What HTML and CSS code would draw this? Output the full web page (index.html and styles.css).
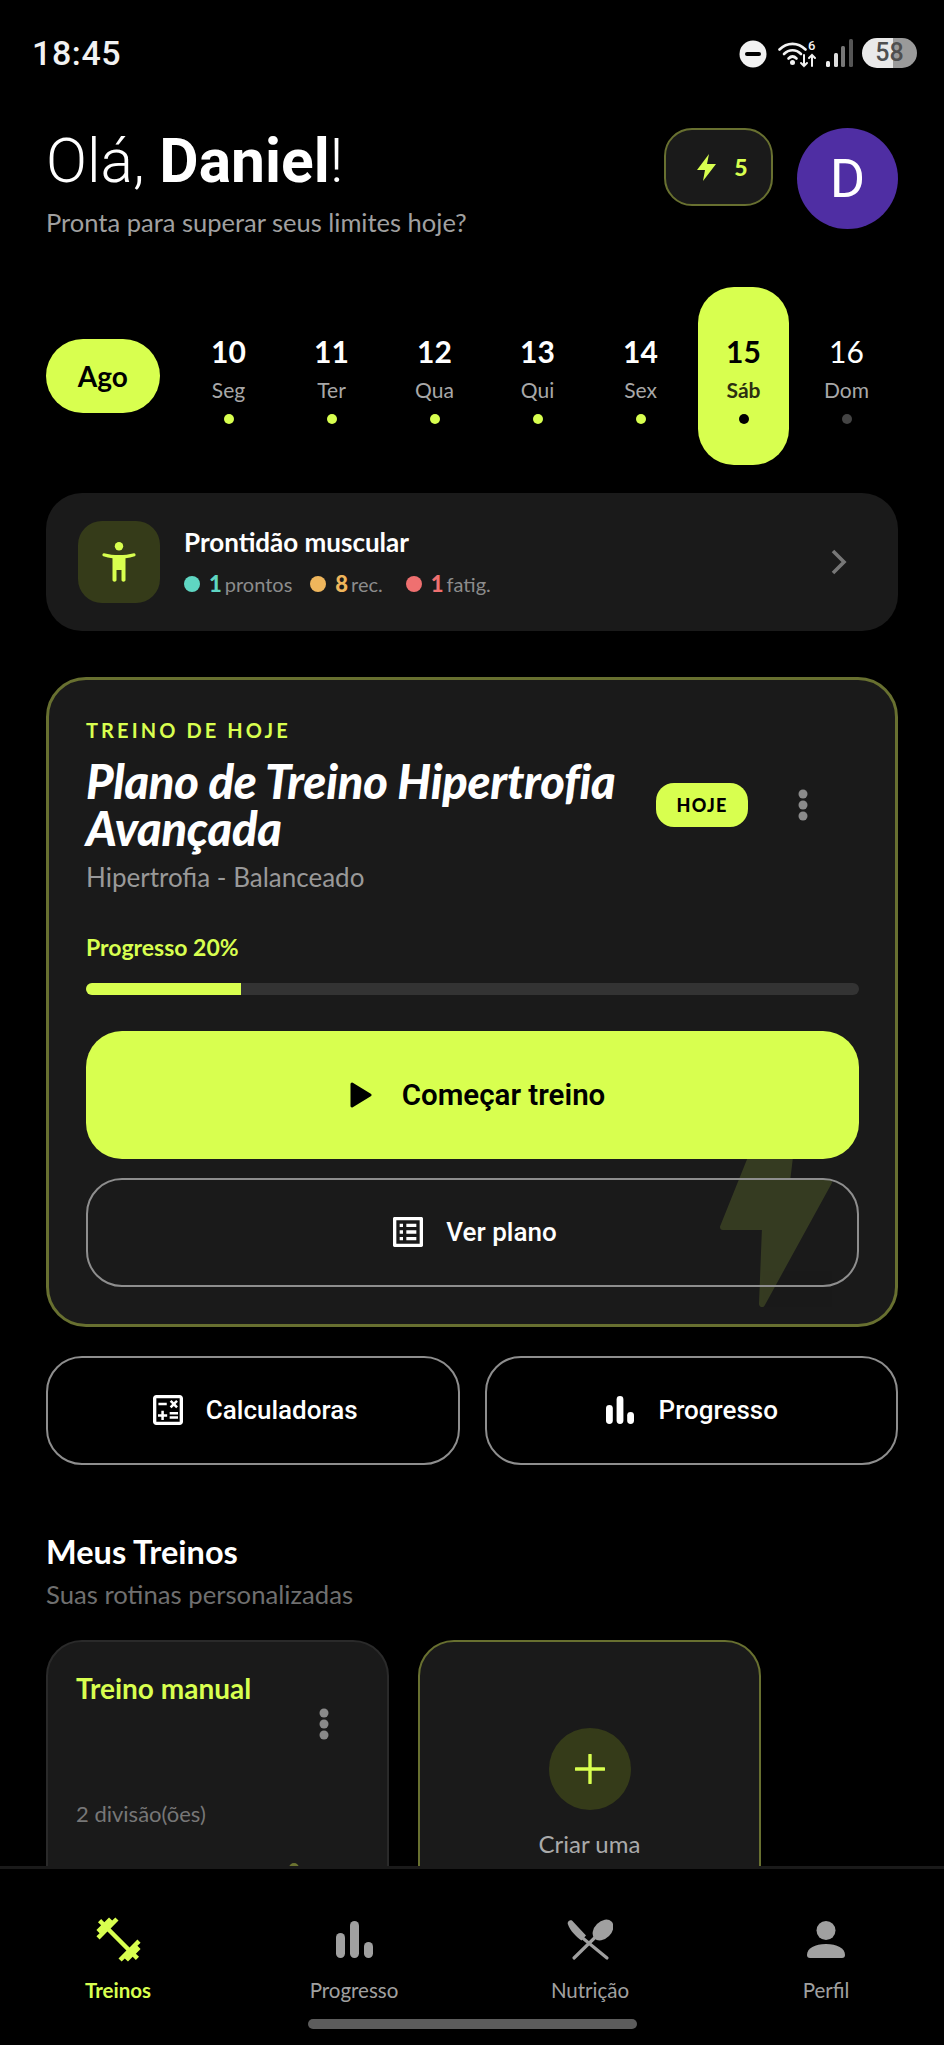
FILE: index.html
```html
<!DOCTYPE html>
<html lang="pt-BR">
<head>
<meta charset="utf-8">
<title>Treinos</title>
<link rel="stylesheet" href="styles.css">
</head>
<body>
<div class="app">
  <div class="status">
    <span class="time">18:45</span>
    <div class="status-icons">
      <svg class="si-dnd" width="28" height="28" viewBox="0 0 28 28"><circle cx="14" cy="14" r="13.500" fill="#f2f2f2"/><rect x="6" y="12" width="16" height="4" rx="2" fill="#000"/></svg>
      <svg class="si-wifi" width="40" height="34" viewBox="0 -4 40 34"><g fill="none" stroke="#f2f2f2" stroke-width="2.6" stroke-linecap="round"><path d="M1.500 9.500C9 2 20 2 27.500 9.500"/><path d="M6 14C11 9 18 9 23 14"/><path d="M10.500 18.500C13 16 16 16 18.500 18.500"/><path d="M26 15v11m-3-3l3 3 3-3" stroke-width="2"/><path d="M34 26V15m-3 3l3-3 3 3" stroke-width="2"/></g><circle cx="14.500" cy="22.500" r="2.500" fill="#f2f2f2"/><text class="si-six" x="30" y="10">6</text></svg>
      <svg class="si-signal" width="27" height="28" viewBox="0 0 27 28"><rect x="0" y="22" width="4" height="6" rx="1.500" fill="#eee"/><rect x="8" y="14" width="4" height="14" rx="1.500" fill="#ddd"/><rect x="15" y="7" width="4" height="21" rx="1.500" fill="#777"/><rect x="23" y="0" width="4" height="28" rx="1.500" fill="#555"/></svg>
      <span class="battery">58</span>
    </div>
  </div>

  <main class="main">
    <header class="greet">
      <div class="greet-text">
        <h1 class="hello">Olá, <b>Daniel</b>!</h1>
        <p class="hello-sub">Pronta para superar seus limites hoje?</p>
      </div>
      <div class="streak">
        <svg width="19" height="27" viewBox="0 0 19 27"><path d="M12 0L0 16h8L6 27 19 10h-9z" fill="#d8ff4f"/></svg>
        <span class="streak-num">5</span>
      </div>
      <div class="avatar">D</div>
    </header>

    <section class="strip">
      <div class="month">Ago</div>
      <div class="days">
        <div class="day"><span class="day-n">10</span><span class="day-l">Seg</span><i class="day-dot"></i></div>
        <div class="day"><span class="day-n">11</span><span class="day-l">Ter</span><i class="day-dot"></i></div>
        <div class="day"><span class="day-n">12</span><span class="day-l">Qua</span><i class="day-dot"></i></div>
        <div class="day"><span class="day-n">13</span><span class="day-l">Qui</span><i class="day-dot"></i></div>
        <div class="day"><span class="day-n">14</span><span class="day-l">Sex</span><i class="day-dot"></i></div>
        <div class="day day-active"><span class="day-n">15</span><span class="day-l">Sáb</span><i class="day-dot"></i></div>
        <div class="day day-off"><span class="day-n">16</span><span class="day-l">Dom</span><i class="day-dot"></i></div>
      </div>
    </section>

    <section class="ready">
      <div class="ready-icon">
        <svg width="34" height="40" viewBox="0 0 34 40" fill="#d8ff4f"><circle cx="17" cy="4.200" r="4.200"/><path d="M2 11.200c5 1.200 10 1.900 15 1.900s10-.7 15-1.900c1.500-.3 2.300 2.500.7 3-3 1-6 1.600-9.200 2V38c0 2.300-4 2.300-4 0V28h-5v10c0 2.300-4 2.300-4 0V16.200c-3.200-.4-6.200-1-9.200-2-1.600-.5-.8-3.300.7-3z"/><path d="M16.200 28h1.600v10h-1.600z" fill="#353b19"/></svg>
      </div>
      <div class="ready-body">
        <div class="ready-title">Prontidão muscular</div>
        <div class="ready-stats">
          <i class="sdot sdot-teal"></i><b class="n-teal">1</b><span class="stat-l">prontos</span>
          <i class="sdot sdot-orange"></i><b class="n-orange">8</b><span class="stat-l">rec.</span>
          <i class="sdot sdot-red"></i><b class="n-red">1</b><span class="stat-l">fatig.</span>
        </div>
      </div>
      <svg class="chev" width="18" height="26" viewBox="0 0 18 26"><path d="M3 2l11 11L3 24" fill="none" stroke="#777" stroke-width="3.600"/></svg>
    </section>

    <section class="today">
      <svg class="bolt" width="113" height="158" viewBox="0 0 113 158"><path d="M38 -10H72L67 32H109L42 154L45 77H3z" fill="#d8ff4f" stroke="#d8ff4f" stroke-width="6" stroke-linejoin="round"/></svg>
      <div class="today-label">TREINO DE HOJE</div>
      <div class="today-head">
        <h2 class="today-title">Plano de Treino Hipertrofia Avançada</h2>
        <span class="pill">HOJE</span>
        <svg class="kebab" width="10" height="32" viewBox="0 0 10 32"><circle cx="5" cy="5" r="4.500"/><circle cx="5" cy="16" r="4.500"/><circle cx="5" cy="27" r="4.500"/></svg>
      </div>
      <p class="today-sub">Hipertrofia - Balanceado</p>
      <div class="prog-label">Progresso 20%</div>
      <div class="prog-track"><div class="prog-fill" style="width:20%"></div></div>
      <button class="btn-primary">
        <svg width="22" height="26" viewBox="0 0 22 26"><path d="M2 2l18 11L2 24z" fill="#000" stroke="#000" stroke-width="3" stroke-linejoin="round"/></svg>
        Começar treino
      </button>
      <button class="btn-outline">
        <svg width="40" height="40" viewBox="0 0 24 24" fill="#fff"><path d="M19 5v14H5V5h14m1.100-2H3.900c-.5 0-.9.4-.9.9v16.200c0 .4.400.9.900.9h16.200c.400 0 .9-.5.9-.9V3.900c0-.5-.5-.9-.9-.9zM11 7h6v2h-6V7zm0 4h6v2h-6v-2zm0 4h6v2h-6v-2zM7 7h2v2H7V7zm0 4h2v2H7v-2zm0 4h2v2H7v-2z"/></svg>
        Ver plano
      </button>
    </section>

    <section class="quick">
      <button class="btn-outline">
        <svg width="40" height="40" viewBox="0 0 24 24" fill="#fff"><path d="M19 3H5c-1.100 0-2 .9-2 2v14c0 1.100.9 2 2 2h14c1.100 0 2-.9 2-2V5c0-1.100-.9-2-2-2zm0 16H5V5h14v14zM6.250 7.720h5v1.500h-5zM13 15.750h5v1.500h-5zM13 13.250h5v1.500h-5zM8 18h1.500v-2h2v-1.500h-2v-2H8v2H6V16h2zM14.090 10.950l1.410-1.410 1.410 1.410 1.060-1.060-1.410-1.420 1.410-1.410L16.910 6 15.500 7.410 14.090 6l-1.060 1.060 1.410 1.410-1.410 1.420z"/></svg>
        Calculadoras
      </button>
      <button class="btn-outline btn-wide-gap">
        <svg width="30" height="28" viewBox="0 0 37 37" fill="#fff"><rect x="0" y="12" width="9" height="25" rx="4.500"/><rect x="14" y="0" width="9" height="37" rx="4.500"/><rect x="28" y="21" width="9" height="16" rx="4.500"/></svg>
        Progresso
      </button>
    </section>

    <section class="mine">
      <h3 class="mine-title">Meus Treinos</h3>
      <p class="mine-sub">Suas rotinas personalizadas</p>
      <div class="mine-cards">
        <article class="plan">
          <div class="plan-title">Treino manual</div>
          <div class="plan-menu"><svg class="kebab" width="10" height="32" viewBox="0 0 10 32"><circle cx="5" cy="5" r="4.500"/><circle cx="5" cy="16" r="4.500"/><circle cx="5" cy="27" r="4.500"/></svg></div>
          <div class="plan-meta">2 divisão(ões)</div>
          <i class="plan-mark"></i>
        </article>
        <article class="plan plan-new">
          <div class="plus">
            <svg width="30" height="30" viewBox="0 0 30 30"><path d="M15 1v28M1 15h28" stroke="#d8ff4f" stroke-width="3.400" stroke-linecap="round"/></svg>
          </div>
          <div class="new-label">Criar uma</div>
        </article>
      </div>
    </section>
  </main>

  <nav class="nav">
    <div class="nav-items">
      <div class="nav-item nav-on">
        <svg width="53" height="53" viewBox="0 0 24 24" fill="#d8ff4f"><path d="M20.570 14.860L22 13.430 20.570 12 17 15.570 8.430 7 12 3.430 10.570 2 9.140 3.430 7.710 2 5.570 4.140 4.140 2.710 2.710 4.140l1.430 1.430L2 7.710l1.430 1.430L2 10.570 3.430 12 7 8.430 15.570 17 12 20.570 13.430 22l1.430-1.430L16.290 22l2.140-2.140 1.430 1.430 1.430-1.430-1.430-1.430L22 16.290z"/></svg>
        <span class="nav-label">Treinos</span>
      </div>
      <div class="nav-item">
        <svg width="37" height="37" viewBox="0 0 37 37" fill="#a0a0a0"><rect x="0" y="12" width="9" height="25" rx="4.500"/><rect x="14" y="0" width="9" height="37" rx="4.500"/><rect x="28" y="21" width="9" height="16" rx="4.500"/></svg>
        <span class="nav-label">Progresso</span>
      </div>
      <div class="nav-item">
        <svg width="46" height="42" viewBox="0 0 46 42"><g fill="#a0a0a0"><ellipse cx="36" cy="11.500" rx="12" ry="8.500" transform="rotate(-45 36 11.500)"/><path d="M1 6c-1-2 1-5 4-4l14 15-4.500 5C9 18 3 12 1 6z"/></g><path d="M29 18L7 39.500M15 19l25 20.500" stroke="#a0a0a0" stroke-width="3.200" stroke-linecap="round" fill="none"/></svg>
        <span class="nav-label">Nutrição</span>
      </div>
      <div class="nav-item">
        <svg width="38" height="37" viewBox="0 0 38 37" fill="#a0a0a0"><circle cx="19" cy="9.500" r="9.500"/><path d="M0 34c0-7 8-11 19-11s19 4 19 11c0 2-1 3-3 3H3c-2 0-3-1-3-3z"/></svg>
        <span class="nav-label">Perfil</span>
      </div>
    </div>
    <div class="home-bar"></div>
  </nav>
</div>
</body>
</html>
```

FILE: styles.css
```css
* { box-sizing: border-box; }
html, body { margin: 0; padding: 0; background: #000; }
body { font-family: "Lato", "Noto Sans", sans-serif; color: #fff; }
h1, h2, h3, p { margin: 0; font-weight: inherit; }
i { display: block; }
button { font: inherit; color: inherit; background: none; border: 0; padding: 0; }

.app { width: 944px; height: 2045px; display: flex; flex-direction: column; overflow: hidden; background: #000; }

/* status bar */
.status { height: 106px; flex: none; display: flex; align-items: center; justify-content: space-between; padding: 0 27px 0 32px; }
.time { font-family: "Roboto", sans-serif; font-weight: 500; font-size: 34px; color: #f2f2f2; letter-spacing: .6px; }
.status-icons { display: flex; align-items: center; }
.si-dnd { margin-top: 2px; }
.si-wifi { margin-left: 11px; }
.si-signal { margin-left: 8px; }
.si-six { font-family: "Roboto", sans-serif; font-size: 13px; font-weight: 500; fill: #f2f2f2; }
.battery { margin-left: 9px; width: 55px; height: 30px; border-radius: 15px; background: linear-gradient(90deg, #e9e9e9 0 57%, #9a9a9a 57%); color: #4f4f4f; font-family: "Roboto", sans-serif; font-weight: 500; font-size: 25px; line-height: 30px; text-align: center; }

/* scroll area */
.main { flex: 1; min-height: 0; overflow: hidden; padding: 22px 46px 0; }

.greet { display: flex; align-items: flex-start; }
.greet-text { flex: 1; }
.hello { font-family: "Roboto", sans-serif; font-weight: 300; font-size: 60.500px; line-height: 68px; }
.hello b { font-weight: 700; }
.hello-sub { margin-top: 11px; font-size: 25.500px; line-height: 30px; color: #a0a0a0; }
.streak { width: 109px; height: 78px; border: 2.500px solid #687030; border-radius: 28px; background: #1a1a1a; display: flex; align-items: center; justify-content: center; gap: 18px; padding-left: 8px; }
.streak-num { color: #d8ff4f; font-weight: 900; font-size: 23px; }
.avatar { width: 101px; height: 101px; margin-left: 24px; border-radius: 50%; background: #4f2ea3; display: flex; align-items: center; justify-content: center; font-family: "Roboto", sans-serif; font-size: 54px; font-weight: 400; }

/* date strip */
.strip { margin-top: 50px; height: 178px; display: flex; align-items: center; }
.month { width: 114px; height: 74px; border-radius: 37px; background: #d8ff4f; color: #000; font-weight: 700; font-size: 28px; display: flex; align-items: center; justify-content: center; }
.days { margin-left: 17.500px; display: grid; grid-template-columns: repeat(7, 103px); height: 100%; }
.day { width: 91px; justify-self: center; height: 100%; border-radius: 36px; padding-top: 49px; display: flex; flex-direction: column; align-items: center; }
.day-n { font-size: 30px; line-height: 30px; font-weight: 700; }
.day-l { margin-top: 11px; font-size: 21px; line-height: 26px; color: #a8a8a8; }
.day-dot { margin-top: 11px; width: 10px; height: 10px; border-radius: 50%; background: #d8ff4f; }
.day-active { background: #d8ff4f; color: #000; }
.day-active .day-l { color: #2c3010; font-weight: 700; }
.day-active .day-dot { background: #000; }
.day-off .day-n { font-weight: 400; }
.day-off .day-dot { background: #444; }

/* readiness */
.ready { margin-top: 28px; height: 138px; border-radius: 36px; background: #1a1a1a; display: flex; align-items: center; padding: 0 50px 0 32px; }
.ready-icon { width: 82px; height: 82px; border-radius: 24px; background: #353b19; display: flex; align-items: center; justify-content: center; }
.ready-body { flex: 1; margin-left: 24px; }
.ready-title { font-weight: 700; font-size: 26px; line-height: 30px; }
.ready-stats { margin-top: 14px; display: flex; align-items: center; font-size: 20px; line-height: 26px; }
.ready-stats b { margin-left: 9px; font-weight: 900; font-size: 22px; }
.stat-l { margin-left: 3px; margin-right: 18px; color: #8c8c8c; }
.sdot { width: 16px; height: 16px; border-radius: 50%; }
.sdot-teal { background: #5fd6c2; }
.sdot-orange { background: #efb65c; }
.sdot-red { background: #ef7070; margin-left: 5px; }
.n-teal { color: #5fd6c2; }
.n-orange { color: #efb65c; }
.n-red { color: #ef7070; }

/* today card */
.today { position: relative; margin-top: 46px; border: 3px solid #687030; border-radius: 40px; background: #1a1a1a; padding: 37px 36px 37px 37px; overflow: hidden; }
.bolt { position: absolute; right: 62px; bottom: 16px; opacity: .143; }
.today-label { font-size: 20px; line-height: 26px; font-weight: 700; letter-spacing: 3.100px; color: #d8ff4f; }
.today-head { margin-top: 15px; display: flex; align-items: center; }
.today-title { flex: none; width: 570px; font-weight: 900; font-style: italic; font-size: 47px; line-height: 47px; letter-spacing: -.25px; }
.pill { width: 92px; height: 44px; border-radius: 18px; background: #d8ff4f; color: #000; font-weight: 900; font-size: 18px; letter-spacing: 1.200px; display: flex; align-items: center; justify-content: center; }
.kebab { fill: #8a8a8a; }
.today-head .kebab { margin-left: 50px; }
.today-sub { margin-top: 10px; font-size: 26px; line-height: 30px; color: #999; }
.prog-label { margin-top: 42px; font-size: 23px; line-height: 26px; font-weight: 700; color: #d8ff4f; }
.prog-track { margin-top: 23px; height: 12px; border-radius: 6px; background: #333; overflow: hidden; }
.prog-fill { height: 100%; background: #d8ff4f; }
.btn-primary { position: relative; z-index: 1; margin-top: 36px; width: 100%; height: 128px; border-radius: 36px; background: #d8ff4f; color: #000; font-family: "Roboto", sans-serif; font-weight: 600; font-size: 29.500px; display: flex; align-items: center; justify-content: center; gap: 30px; padding-left: 10px; }
.btn-outline { width: 100%; height: 109px; border: 2px solid #8e8e8e; border-radius: 36px; color: #fff; font-family: "Roboto", sans-serif; font-weight: 500; font-size: 26px; display: flex; align-items: center; justify-content: center; gap: 18px; padding-bottom: 2px; }
.btn-wide-gap { gap: 24px; }
.btn-primary + .btn-outline { position: relative; margin-top: 19px; }

.quick { margin-top: 29px; display: grid; grid-template-columns: 1fr 1fr; gap: 25px; }

/* my plans */
.mine { margin-top: 68px; }
.mine-title { font-weight: 700; font-size: 32.500px; line-height: 38px; }
.mine-sub { margin-top: 8px; font-size: 25.700px; line-height: 30px; color: #6f6f6f; }
.mine-cards { margin-top: 31px; display: flex; gap: 29px; }
.plan { position: relative; flex: none; width: 343px; height: 300px; border: 2px solid #2a2a2a; border-radius: 36px; background: #1a1a1a; padding: 31px 0 0 28px; }
.plan-title { font-size: 28px; line-height: 30px; font-weight: 700; color: #d8ff4f; }
.plan-menu { margin-top: 5px; padding-right: 58px; display: flex; justify-content: flex-end; }
.plan-meta { margin-top: 61px; font-size: 22px; line-height: 26px; color: #777; }
.plan-mark { position: absolute; left: 241px; top: 221px; width: 10px; height: 10px; border-radius: 50%; background: #6a7230; }
.plan-new { border-color: #687030; padding: 86px 0 0; display: flex; flex-direction: column; align-items: center; }
.plus { width: 82px; height: 82px; border-radius: 50%; background: #353b19; display: flex; align-items: center; justify-content: center; }
.new-label { margin-top: 21px; font-size: 24px; line-height: 26px; color: #aaa; }

/* bottom nav */
.nav { flex: none; height: 179px; border-top: 3px solid #1a1a1a; background: #000; position: relative; }
.nav-items { display: grid; grid-template-columns: repeat(4, 236px); padding-top: 44px; }
.nav-item { display: flex; flex-direction: column; align-items: center; color: #a0a0a0; }
.nav-item svg { height: 53px; }
.nav-label { margin-top: 12px; font-size: 20.500px; line-height: 24px; }
.nav-on .nav-label { color: #d8ff4f; font-weight: 700; }
.home-bar { width: 329px; height: 10px; margin: 17px auto 0; border-radius: 5px; background: #5c5c5c; }
```
